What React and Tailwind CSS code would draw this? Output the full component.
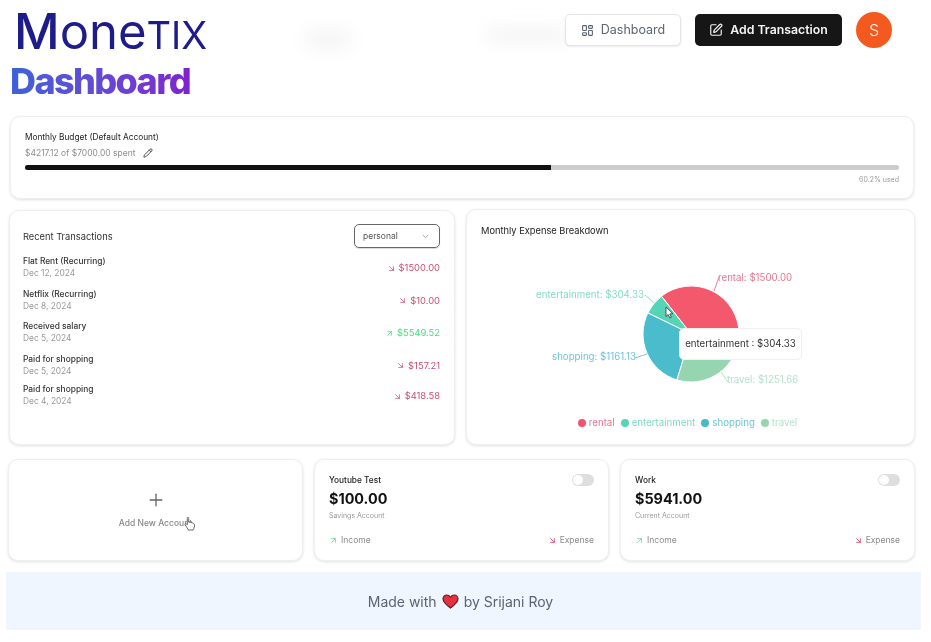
import React from "react";
import { LayoutDashboard, SquarePen, Pencil, ChevronDown, ArrowDownRight, ArrowUpRight, Plus } from "lucide-react";

const card = "bg-white rounded-[10px] border border-[#efefef] shadow-[0_1px_3px_rgba(0,0,0,0.12)]";

const tx = [
  ["Flat Rent (Recurring)", "Dec 12, 2024", "$1500.00", false],
  ["Netflix (Recurring)", "Dec 8, 2024", "$10.00", false],
  ["Received salary", "Dec 5, 2024", "$5549.52", true],
  ["Paid for shopping", "Dec 5, 2024", "$157.21", false],
  ["Paid for shopping", "Dec 4, 2024", "$418.58", false],
];

function wedge(a0, a1, r = 48, cx = 224, cy = 85) {
  const p = (a) => [cx + r * Math.cos((a * Math.PI) / 180), cy - r * Math.sin((a * Math.PI) / 180)];
  const [x0, y0] = p(a0);
  const [x1, y1] = p(a1);
  return `M${cx} ${cy}L${x0} ${y0}A${r} ${r} 0 ${a1 - a0 > 180 ? 1 : 0} 0 ${x1} ${y1}Z`;
}

const slices = [
  [0, 128, "#f4586c"],
  [128, 154, "#56d4b6"],
  [154, 253, "#4bbccc"],
  [253, 360, "#97d5b0"],
];

function Account({ name, amount, type }) {
  return (
    <div className={`${card} relative flex flex-col pl-[14px] pr-[14px] pt-[14px] pb-[14px] h-[102px]`}>
      <div className="flex items-start justify-between">
        <div className="text-[8.3px] leading-[12px] font-medium text-[#222]">{name}</div>
        <div className="w-[22px] h-[12px] rounded-full bg-[#dedede] flex items-center pl-[1px]">
          <div className="w-[10px] h-[10px] rounded-full bg-white" />
        </div>
      </div>
      <div className="text-[14.4px] leading-[20px] font-bold text-[#111] mt-[3px]">{amount}</div>
      <div className="text-[7px] leading-[10px] text-[#9a9a9a] mt-[2px]">{type}</div>
      <div className="mt-auto flex justify-between text-[8.5px] leading-[12px] text-[#8a8a8a]">
        <div className="flex items-center gap-[3px]">
          <ArrowUpRight size={9} className="text-[#4ade80]" />
          Income
        </div>
        <div className="flex items-center gap-[3px]">
          <ArrowDownRight size={9} className="text-[#d2365a]" />
          Expense
        </div>
      </div>
    </div>
  );
}

export default function App() {
  return (
    <div className="relative w-[931px] h-[642px] overflow-hidden bg-white blur-[0.35px] font-['Inter',sans-serif]">
      <div className="absolute left-[303px] top-[28px] w-[50px] h-[22px] rounded-full bg-[#f6f6f6] blur-[8px]" />
      <div className="absolute left-[485px] top-[26px] w-[85px] h-[18px] rounded-full bg-[#f6f6f6] blur-[8px]" />

      <header className="relative h-[61px] flex items-start justify-between pl-[14px] pr-[39px]">
        <div className="flex items-baseline h-[40px] leading-[40px] text-[#1e1b8a] font-normal mt-[11px] whitespace-nowrap">
          <span className="text-[50px] font-medium">M</span>
          <span className="text-[49px]">one</span>
          <span className="text-[38px]">TIX</span>
        </div>
        <div className="flex items-center gap-[14px] mt-[12px]">
          <div className="flex items-center justify-center gap-[7px] w-[116px] h-[32px] rounded-[5px] border border-[#e5e5e5] shadow-[0_1px_2px_rgba(0,0,0,0.08)] bg-white text-[12.5px] text-[#5b6470]">
            <LayoutDashboard size={13} />
            Dashboard
          </div>
          <div className="flex items-center justify-center gap-[7px] w-[147px] h-[32px] rounded-[5px] bg-[#161616] text-[12.3px] font-semibold text-[#f4f4f4]">
            <SquarePen size={14} />
            Add Transaction
          </div>
          <div className="w-[36px] h-[36px] rounded-full bg-[#f4591f] text-white text-[16px] font-light flex items-center justify-center">S</div>
        </div>
      </header>

      <h1 className="ml-[10px] text-[36px] leading-[40px] font-extrabold tracking-[-0.045em] w-max bg-linear-to-r from-[#3b62d9] to-[#7e22ce] bg-clip-text text-transparent">
        Dashboard
      </h1>

      <section className={`${card} ml-[10px] mt-[15px] w-[904px] h-[83px] px-[14px] pt-[14px]`}>
        <div className="text-[8.3px] leading-[12px] font-normal text-[#222]">Monthly Budget (Default Account)</div>
        <div className="flex items-center gap-[7px] mt-[4px] text-[8.5px] leading-[12px] text-[#8d8d8d]">
          $4217.12 of $7000.00 spent
          <Pencil size={10} className="text-[#333]" />
        </div>
        <div className="mt-[6px] h-[5px] rounded-full bg-[#cdcdcd] overflow-hidden">
          <div className="h-full w-[60.2%] bg-[#111]" />
        </div>
        <div className="text-right text-[7px] leading-[10px] mt-[5px] text-[#999]">60.2% used</div>
      </section>

      <div className="flex gap-[11px] ml-[9px] mt-[10px] items-end">
        <section className={`${card} w-[446px] h-[235px] px-[13px] pt-[13px]`}>
          <div className="flex items-center justify-between pr-[1px]">
            <div className="text-[9.3px] text-[#333] mt-[1px]">Recent Transactions</div>
            <div className="w-[86px] h-[24px] rounded-[5px] border border-[#666] shadow-[0_1px_1px_rgba(0,0,0,0.15)] flex items-center justify-between pl-[8px] pr-[9px] text-[8.5px] text-[#555]">
              personal
              <ChevronDown size={9} className="text-[#888]" />
            </div>
          </div>
          <div className="mt-[7px] flex flex-col gap-[7.5px] pr-[1px]">
            {tx.map(([t, d, a, up], i) => (
              <div key={i} className={`flex items-center justify-between h-[25px] ${i === 4 ? "-mt-[2px]" : ""}`}>
                <div>
                  <div className="text-[8.4px] leading-[12px] font-medium text-[#333]">{t}</div>
                  <div className="text-[8.4px] leading-[13px] text-[#999]">{d}</div>
                </div>
                <div className={`flex items-center gap-[3px] mt-[2px] text-[9.4px] ${up ? "text-[#4ade80]" : "text-[#c8506e]"}`}>
                  {up ? <ArrowUpRight size={9} /> : <ArrowDownRight size={9} />}
                  {a}
                </div>
              </div>
            ))}
          </div>
        </section>

        <section className={`${card} relative w-[449px] h-[236px]`}>
          <div className="text-[9.3px] leading-[14px] text-[#222] pl-[14px] pt-[14px]">Monthly Expense Breakdown</div>
          <svg width="449" height="167" viewBox="0 0 449 167" className="mt-[11px] block">
            {slices.map(([a, b, c]) => (
              <path key={c} d={wedge(a, b)} fill={c} stroke="#fff" strokeWidth="1" />
            ))}
            <g fill="none" strokeWidth="1">
              <path d="M247 42L252 28" stroke="#e9839a" />
              <path d="M178 46L187 54" stroke="#8fe0cc" />
              <path d="M168 109L180 105" stroke="#7ac9d6" />
              <path d="M254 123L261 133" stroke="#b5dfcc" />
            </g>
            <g fontSize="9.7" fontFamily="Inter, sans-serif">
              <text x="251" y="32" fill="#e5788f">rental: $1500.00</text>
              <text x="177" y="49" textAnchor="end" fill="#83dcc8">entertainment: $304.33</text>
              <text x="169" y="111" textAnchor="end" fill="#70c4d3">shopping: $1161.13</text>
              <text x="260" y="134" fill="#b7e0ce">travel: $1251.66</text>
            </g>
            <path d="M199 58l0 9.5l2.2-2l1.6 3.4l1.6-.7l-1.6-3.3l3-.2z" fill="#fff" stroke="#333" strokeWidth="0.8" />
          </svg>
          <div className="absolute left-[212px] top-[118px] w-[123px] h-[32px] rounded-[5px] bg-white border border-[#f0f0f0] flex items-center justify-center whitespace-nowrap text-[9.7px] text-[#333]">
            entertainment : $304.33
          </div>
          <div className="flex items-center justify-center text-[9.7px] leading-[14px] gap-[6px] pr-[6px]">
            {[["rental", "#ee5470", "#e5788f"], ["entertainment", "#56d4b6", "#7fdac6"], ["shopping", "#47b9c9", "#70c4d3"], ["travel", "#97d5b0", "#b7e0ce"]].map(([l, c, t]) => (
              <div key={l} className="flex items-center gap-[3px]" style={{ color: t }}>
                <span className="w-[8px] h-[8px] rounded-full" style={{ background: c }} />
                {l}
              </div>
            ))}
          </div>
        </section>
      </div>

      <div className="grid grid-cols-[295px_295px_295px] gap-[11px] ml-[8px] mt-[14px]">
        <div className={`${card} relative h-[102px] flex flex-col items-center pt-[30px]`}>
          <Plus size={20} strokeWidth={1.6} className="text-[#666]" />
          <div className="text-[8.5px] leading-[12px] font-medium text-[#888] mt-[7px]">Add New Account</div>
          <svg width="12" height="15" viewBox="0 0 12 15" className="absolute left-[175px] top-[56px]">
            <path d="M3.5 1.2c.8 0 1.2.6 1.2 1.3v3.6c1.8.2 5.6.6 5.8 2.6c.2 1.5-.4 3.5-1.4 5.3H4.5L1.2 8.9c-.5-.9.6-1.7 1.3-1l.8.8V2.5c0-.7 0-1.3.2-1.3z" fill="#fff" stroke="#555" strokeWidth="0.9" />
          </svg>
        </div>
        <Account name="Youtube Test" amount="$100.00" type="Savings Account" />
        <Account name="Work" amount="$5941.00" type="Current Account" />
      </div>

      <footer className="ml-[6px] mt-[11px] w-[915px] h-[58px] bg-[#eff6ff] flex items-center justify-center gap-[5px] pr-[6px] text-[14px] text-[#5b6470]">
        Made with
        <svg width="17" height="15" viewBox="0 0 17 15">
          <path d="M8.5 14C3 10 1 7.5 1 4.8C1 2.6 2.7 1 4.7 1C6.2 1 7.6 1.8 8.5 3.2C9.4 1.8 10.8 1 12.3 1C14.3 1 16 2.6 16 4.8C16 7.5 14 10 8.5 14Z" fill="#e8303f" stroke="#4a2a2e" strokeWidth="1.2" />
        </svg>
        by Srijani Roy
      </footer>
    </div>
  );
}
